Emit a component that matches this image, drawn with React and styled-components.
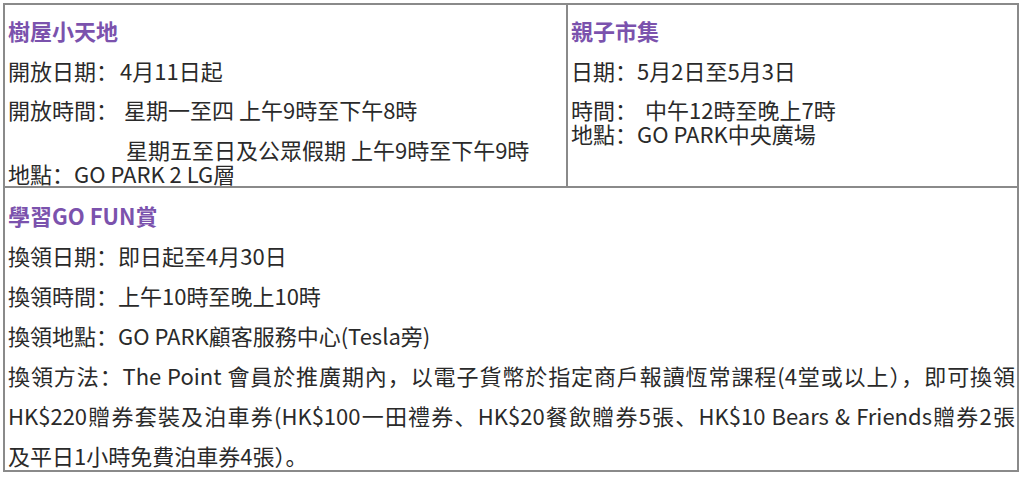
import React from 'react';
import styled, { createGlobalStyle } from 'styled-components';

const GlobalStyle = createGlobalStyle`
  html, body {
    margin: 0;
    padding: 0;
    background: #ffffff;
  }
  body {
    font-family: "Noto Sans CJK SC", "Noto Sans CJK TC", "Noto Sans", sans-serif;
    color: #2a2a2a;
  }
`

const Table = styled.div`
  margin: 3px 0 0 3px;
  width: 1016px;
  box-sizing: border-box;
  border: 2px solid #8a8a8a;
`

const TopRow = styled.div`
  display: grid;
  grid-template-columns: 563px 1fr;
  height: 183px;
  border-bottom: 2px solid #8a8a8a;
  box-sizing: border-box;
`

const Cell = styled.div`
  box-sizing: border-box;
  padding: 13px 4px 0 3px;
  border-right: ${p => (p.$divider ? '2px solid #8a8a8a' : 'none')};
  font-size: 22px;
`

const BottomCell = styled.div`
  box-sizing: border-box;
  height: 282px;
  padding: 7px 2px 0 3px;
  font-size: 22px;
  line-height: 40px;
`

const Title = styled.div`
  color: #7b52ad;
  font-weight: 700;
  line-height: ${p => (p.$tall ? '40px' : '24px')};
  margin-bottom: ${p => (p.$tall ? '0' : '15.5px')};
`

const Line = styled.div`
  line-height: ${p => (p.$tall ? '40px' : '24px')};
  margin-bottom: ${p => (p.$tight || p.$tall ? '0' : '15.5px')};
  padding-left: ${p => p.$indent || 0}px;
  white-space: nowrap;
  text-align: ${p => (p.$justify ? 'justify' : 'left')};
  text-align-last: ${p => (p.$justify ? 'justify' : 'auto')};
`

const Value = styled.span`
  margin-left: ${p => p.$gap || 0}px;
`

function App() {
  return (
    <>
      <GlobalStyle />
      <Table>
        <TopRow>
          <Cell $divider>
            <Title>樹屋小天地</Title>
            <Line>開放日期：<Value $gap={2}>4月11日起</Value></Line>
            <Line>開放時間：<Value $gap={6}>星期一至四 上午9時至下午8時</Value></Line>
            <Line $tight $indent={118}>星期五至日及公眾假期 上午9時至下午9時</Line>
            <Line $tight>地點：<Value>GO PARK 2 LG層</Value></Line>
          </Cell>
          <Cell>
            <Title>親子市集</Title>
            <Line>日期：<Value>5月2日至5月3日</Value></Line>
            <Line $tight>時間：<Value $gap={8}>中午12時至晚上7時</Value></Line>
            <Line $tight>地點：<Value>GO PARK中央廣場</Value></Line>
          </Cell>
        </TopRow>
        <BottomCell>
          <Title $tall>學習GO FUN賞</Title>
          <Line $tall>換領日期：<Value>即日起至4月30日</Value></Line>
          <Line $tall>換領時間：<Value>上午10時至晚上10時</Value></Line>
          <Line $tall>換領地點：<Value>GO PARK顧客服務中心(Tesla旁)</Value></Line>
          <Line $tall $justify>換領方法：The Point 會員於推廣期內，以電子貨幣於指定商戶報讀恆常課程(4堂或以上），即可換領</Line>
          <Line $tall $justify>HK$220贈券套裝及泊車券(HK$100一田禮券、HK$20餐飲贈券5張、HK$10 Bears &amp; Friends贈券2張</Line>
          <Line $tall>及平日1小時免費泊車券4張）。</Line>
        </BottomCell>
      </Table>
    </>
  );
}

export default App;
